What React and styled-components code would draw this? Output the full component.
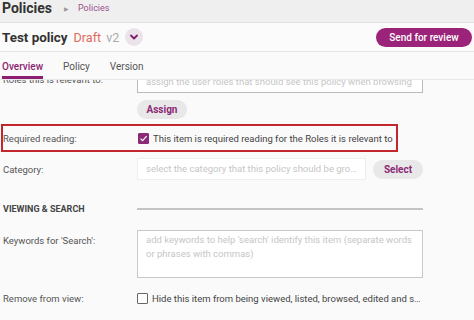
import React from "react";
import styled, { createGlobalStyle } from "styled-components";

const Global = createGlobalStyle`
  html, body { margin: 0; padding: 0; background: #fafafa; }
  body { font-family: Roboto, "Liberation Sans", sans-serif; }
  * { box-sizing: border-box; }
`;

const Page = styled.div`
  width: 474px;
  height: 320px;
  overflow: hidden;
  display: flex;
  flex-direction: column;
  background: #fafafa;
`;

const TopBar = styled.div`
  height: 23px;
  flex: none;
  display: flex;
  align-items: center;
  padding: 0 2px;
  background: #efefef;
  border-bottom: 1px solid #e2e2e2;
`;

const TopTitle = styled.span`
  font-size: 14px;
  font-weight: 700;
  color: #333;
  margin-top: -6px;
`;

const Crumb = styled.span`
  font-size: 6px;
  color: #999;
  margin: -6px 9px 0 12px;
`;

const CrumbLink = styled.span`
  font-size: 9px;
  color: #9b4f8f;
  margin-top: -6px;
`;

const TitleRow = styled.div`
  height: 29px;
  flex: none;
  display: flex;
  align-items: center;
  padding: 0 2px;
  background: #fbfbfb;
  border-bottom: 1px solid #e6e6e6;
`;

const PolicyName = styled.span`
  font-size: 13.4px;
  font-weight: 700;
  color: #333;
`;

const Status = styled.span`
  font-size: 12.6px;
  color: ${(p) => p.$color};
  margin-left: ${(p) => p.$gap}px;
`;

const RoundIcon = styled.button`
  width: 18px;
  height: 18px;
  border-radius: 50%;
  border: none;
  background: #ebe3ea;
  display: flex;
  align-items: center;
  justify-content: center;
  padding: 0;
  margin-left: 6px;
`;

const PrimaryButton = styled.button`
  margin-left: auto;
  margin-right: 0;
  width: 96px;
  height: 19px;
  border: none;
  border-radius: 10px;
  background: #9b2379;
  color: #fff;
  font-family: Roboto, "Liberation Sans", sans-serif;
  font-size: 10px;
  font-weight: 500;
  padding: 0;
`;

const Tabs = styled.div`
  height: 28px;
  flex: none;
  display: flex;
  align-items: stretch;
  gap: 20px;
  padding: 0 2px;
  border-bottom: 1px solid #e8e8e8;
  background: #fafafa;
`;

const Tab = styled.div`
  display: flex;
  align-items: center;
  font-size: 10px;
  font-weight: ${(p) => (p.$active ? 500 : 400)};
  color: ${(p) => (p.$active ? "#8c1f71" : "#555")};
  border-bottom: 3px solid ${(p) => (p.$active ? "#8c1f71" : "transparent")};
  padding-top: 5px;
`;

const Viewport = styled.div`
  flex: 1;
  overflow: hidden;
`;

const Scroller = styled.div`
  margin-top: -9px;
  display: flex;
  flex-direction: column;
`;

const Row = styled.div`
  display: flex;
  align-items: ${(p) => (p.$top ? "flex-start" : "center")};
  padding-left: 3px;
  margin-top: ${(p) => p.$mt || 0}px;
  height: ${(p) => p.$h}px;
`;

const Highlight = styled(Row)`
  width: 397px;
  margin-left: 1px;
  padding-left: 0;
  border: 2px solid #c3272e;
`;

const Label = styled.div`
  width: ${(p) => p.$w || 134}px;
  flex: none;
  font-size: 9.5px;
  color: #555;
  padding-top: ${(p) => p.$pt || 0}px;
`;

const Field = styled.div`
  width: ${(p) => p.$w}px;
  height: ${(p) => p.$h}px;
  flex: none;
  background: #fff;
  border: 1px solid ${(p) => p.$border};
  padding: ${(p) => p.$pad};
  font-size: 9.5px;
  line-height: 14px;
  color: #c6c6c6;
  display: flex;
  align-items: ${(p) => (p.$wrap ? "flex-start" : "center")};
`;

const Placeholder = styled.span`
  min-width: 0;
  white-space: ${(p) => (p.$wrap ? "normal" : "nowrap")};
  overflow: hidden;
  text-overflow: ellipsis;
`;

const SoftButton = styled.button`
  width: ${(p) => p.$w}px;
  height: 19px;
  flex: none;
  border: none;
  border-radius: 10px;
  background: #e8e8e8;
  color: #8c2a77;
  font-family: Roboto, "Liberation Sans", sans-serif;
  font-size: 10px;
  font-weight: 700;
  padding: 0;
  margin-left: ${(p) => p.$ml || 0}px;
`;

const Check = styled.span`
  width: 11px;
  height: 11px;
  flex: none;
  border-radius: 1px;
  display: flex;
  align-items: center;
  justify-content: center;
  background: ${(p) => (p.$on ? "#8c2a77" : "#fff")};
  border: 1px solid ${(p) => (p.$on ? "#8c2a77" : "#666")};
  margin-right: 4px;
`;

const CheckText = styled.span`
  font-size: 9.5px;
  color: #444;
  white-space: nowrap;
  overflow: hidden;
  text-overflow: ellipsis;
`;

const CheckWrap = styled.div`
  display: flex;
  align-items: center;
  min-width: 0;
  width: ${(p) => p.$w}px;
`;

const SectionTitle = styled.div`
  width: 134px;
  flex: none;
  font-size: 9px;
  font-weight: 700;
  color: #444;
`;

const Rule = styled.div`
  width: 286px;
  height: 2px;
  background: #c4c4c4;
`;

export default function App() {
  return (
    <Page>
      <Global />
      <TopBar>
        <TopTitle>Policies</TopTitle>
        <Crumb>▶</Crumb>
        <CrumbLink>Policies</CrumbLink>
      </TopBar>
      <TitleRow>
        <PolicyName>Test policy</PolicyName>
        <Status $color="#e06a5c" $gap={6}>Draft</Status>
        <Status $color="#aaa" $gap={5}>v2</Status>
        <RoundIcon aria-label="more">
          <svg width="10" height="10" viewBox="0 0 10 10">
            <path d="M2 3.5 L5 6.5 L8 3.5" fill="none" stroke="#7d1c69" strokeWidth="1.8" strokeLinecap="round" strokeLinejoin="round" />
          </svg>
        </RoundIcon>
        <PrimaryButton>Send for review</PrimaryButton>
      </TitleRow>
      <Tabs>
        <Tab $active>Overview</Tab>
        <Tab>Policy</Tab>
        <Tab>Version</Tab>
      </Tabs>
      <Viewport>
        <Scroller>
          <Row $h={22} $top>
            <Label $pt={3}>Roles this is relevant to:</Label>
            <Field $w={286} $h={22} $border="#bbb" $pad="0 8px">
              <Placeholder>assign the user roles that should see this policy when browsing</Placeholder>
            </Field>
          </Row>
          <Row $h={18} $mt={7}>
            <Label />
            <SoftButton $w={50}>Assign</SoftButton>
          </Row>
          <Highlight $h={28} $mt={6}>
            <Label $w={135}>Required reading:</Label>
            <CheckWrap $w={256}>
              <Check $on>
                <svg width="9" height="9" viewBox="0 0 9 9">
                  <path d="M1.5 4.6 L3.6 6.6 L7.6 2.2" fill="none" stroke="#fff" strokeWidth="1.2" />
                </svg>
              </Check>
              <CheckText>This item is required reading for the Roles it is relevant to</CheckText>
            </CheckWrap>
          </Highlight>
          <Row $h={22} $mt={6}>
            <Label>Category:</Label>
            <Field $w={229} $h={22} $border="#eee" $pad="0 8px">
              <Placeholder>select the category that this policy should be grouped under</Placeholder>
            </Field>
            <SoftButton $w={50} $ml={7}>Select</SoftButton>
          </Row>
          <Row $h={20} $mt={19}>
            <SectionTitle>VIEWING &amp; SEARCH</SectionTitle>
            <Rule />
          </Row>
          <Row $h={48} $mt={11} $top>
            <Label $pt={5}>Keywords for 'Search':</Label>
            <Field $w={286} $h={48} $border="#c8c8c8" $pad="2px 8px" $wrap>
              <Placeholder $wrap>add keywords to help 'search' identify this item (separate words or phrases with commas)</Placeholder>
            </Field>
          </Row>
          <Row $h={16} $mt={12}>
            <Label>Remove from view:</Label>
            <CheckWrap $w={285}>
              <Check />
              <CheckText>Hide this item from being viewed, listed, browsed, edited and searched</CheckText>
            </CheckWrap>
          </Row>
        </Scroller>
      </Viewport>
    </Page>
  );
}
